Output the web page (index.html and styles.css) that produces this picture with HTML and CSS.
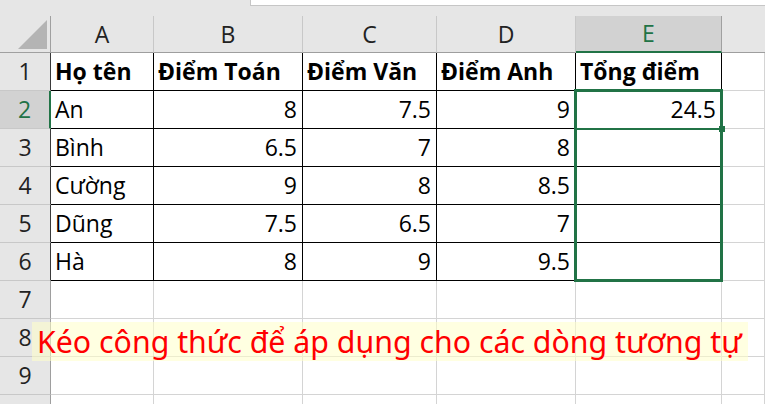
FILE: index.html
```html
<!DOCTYPE html>
<html lang="vi">
<head>
<meta charset="utf-8">
<title>Sheet</title>
<link rel="stylesheet" href="styles.css">
</head>
<body>
<div class="page">
  <div class="topbar"><div class="formula"></div></div>
  <div class="grid">
    <div class="corner"><svg width="50" height="36" viewBox="0 0 50 36"><polygon points="18,33 47,4 47,33" fill="#b4b4b4"/></svg></div>
    <div class="ch">A</div>
    <div class="ch">B</div>
    <div class="ch">C</div>
    <div class="ch">D</div>
    <div class="ch sel">E</div>
    <div class="ch last"></div>

    <div class="rh tb">1</div>
    <div class="c t b">Họ tên</div>
    <div class="c t b">Điểm Toán</div>
    <div class="c t b">Điểm Văn</div>
    <div class="c t b">Điểm Anh</div>
    <div class="c t b">Tổng điểm</div>
    <div class="c"></div>

    <div class="rh tb rsel">2</div>
    <div class="c t">An</div>
    <div class="c t n">8</div>
    <div class="c t n">7.5</div>
    <div class="c t n">9</div>
    <div class="c t n">24.5</div>
    <div class="c"></div>

    <div class="rh tb">3</div>
    <div class="c t">Bình</div>
    <div class="c t n">6.5</div>
    <div class="c t n">7</div>
    <div class="c t n">8</div>
    <div class="c t n"></div>
    <div class="c"></div>

    <div class="rh tb">4</div>
    <div class="c t">Cường</div>
    <div class="c t n">9</div>
    <div class="c t n">8</div>
    <div class="c t n">8.5</div>
    <div class="c t n"></div>
    <div class="c"></div>

    <div class="rh tb">5</div>
    <div class="c t">Dũng</div>
    <div class="c t n">7.5</div>
    <div class="c t n">6.5</div>
    <div class="c t n">7</div>
    <div class="c t n"></div>
    <div class="c"></div>

    <div class="rh tb">6</div>
    <div class="c t">Hà</div>
    <div class="c t n">8</div>
    <div class="c t n">9</div>
    <div class="c t n">9.5</div>
    <div class="c t n"></div>
    <div class="c"></div>

    <div class="rh">7</div>
    <div class="c"></div><div class="c"></div><div class="c"></div><div class="c"></div><div class="c"></div><div class="c"></div>

    <div class="rh">8</div>
    <div class="c"></div><div class="c"></div><div class="c"></div><div class="c"></div><div class="c"></div><div class="c"></div>

    <div class="rh">9</div>
    <div class="c"></div><div class="c"></div><div class="c"></div><div class="c"></div><div class="c"></div><div class="c"></div>

    <div class="rh"></div>
    <div class="c"></div><div class="c"></div><div class="c"></div><div class="c"></div><div class="c"></div><div class="c"></div>
  </div>

  <div class="selection"></div>
  <div class="active-line"></div>
  <div class="handle"></div>
  <div class="note">Kéo công thức để áp dụng cho các dòng tương tự</div>
</div>
</body>
</html>
```

FILE: styles.css
```css
html, body {
  margin: 0;
  padding: 0;
  background: #ffffff;
  overflow: hidden;
}

.page {
  position: relative;
  width: 765px;
  height: 404px;
  overflow: hidden;
  font-family: "Open Sans", "Noto Sans", sans-serif;
  color: #000;
}

.topbar {
  height: 16px;
  background: #e6e6e6;
  display: flex;
  justify-content: flex-end;
}

.formula {
  width: 514px;
  height: 5px;
  background: #ffffff;
  border-left: 1px solid #c6c6c6;
  border-bottom: 1px solid #c6c6c6;
}

.grid {
  display: grid;
  grid-template-columns: 51px 103px 149px 134px 139px 146px 1fr;
  grid-template-rows: 37px repeat(10, 38px);
}

.grid > div {
  box-sizing: border-box;
  overflow: hidden;
  white-space: nowrap;
}

.corner {
  background: #e6e6e6;
  border-right: 1px solid #a0a0a0;
  border-bottom: 1px solid #a0a0a0;
}

.corner svg {
  display: block;
}

.ch {
  background: #e6e6e6;
  border-right: 1px solid #c8c8c8;
  border-bottom: 1px solid #9e9e9e;
  text-align: center;
  font-size: 23px;
  line-height: 36px;
  color: #222;
}

.ch.sel {
  background: #d2d2d2;
  color: #217346;
  border-right-color: #a0a0a0;
  border-bottom: 2px solid #217346;
  line-height: 35px;
}

.ch.last {
  border-right: none;
}

.rh {
  background: #e6e6e6;
  border-right: 1px solid #9e9e9e;
  border-bottom: 1px solid #c8c8c8;
  text-align: center;
  font-size: 23px;
  line-height: 37px;
  color: #222;
}

.rh.tb {
  border-right-color: #3a3a3a;
}

.rh.rsel {
  background: #d2d2d2;
  color: #217346;
  border-right: 2px solid #217346;
}

.c {
  border-right: 1px solid #d4d4d4;
  border-bottom: 1px solid #d4d4d4;
  font-size: 23px;
  line-height: 37px;
  padding: 0 5px 0 4px;
}

.c.t {
  border-right-color: #000;
  border-bottom-color: #000;
}

.c.b {
  font-weight: 700;
}

.c.n {
  text-align: right;
}

.selection {
  position: absolute;
  left: 574px;
  top: 89px;
  width: 149px;
  height: 193px;
  box-sizing: border-box;
  border: 3px solid #217346;
}

.active-line {
  position: absolute;
  left: 576px;
  top: 128px;
  width: 145px;
  height: 2px;
  background: #217346;
}

.handle {
  position: absolute;
  left: 719px;
  top: 126px;
  width: 6px;
  height: 6px;
  background: #217346;
}

.note {
  position: absolute;
  left: 32px;
  top: 322px;
  width: 716px;
  height: 39px;
  box-sizing: border-box;
  padding-left: 5px;
  background: rgba(255, 255, 200, 0.55);
  color: #ff0000;
  font-family: "Noto Sans", "Open Sans", sans-serif;
  font-size: 30.3px;
  line-height: 39px;
  white-space: nowrap;
}
```
